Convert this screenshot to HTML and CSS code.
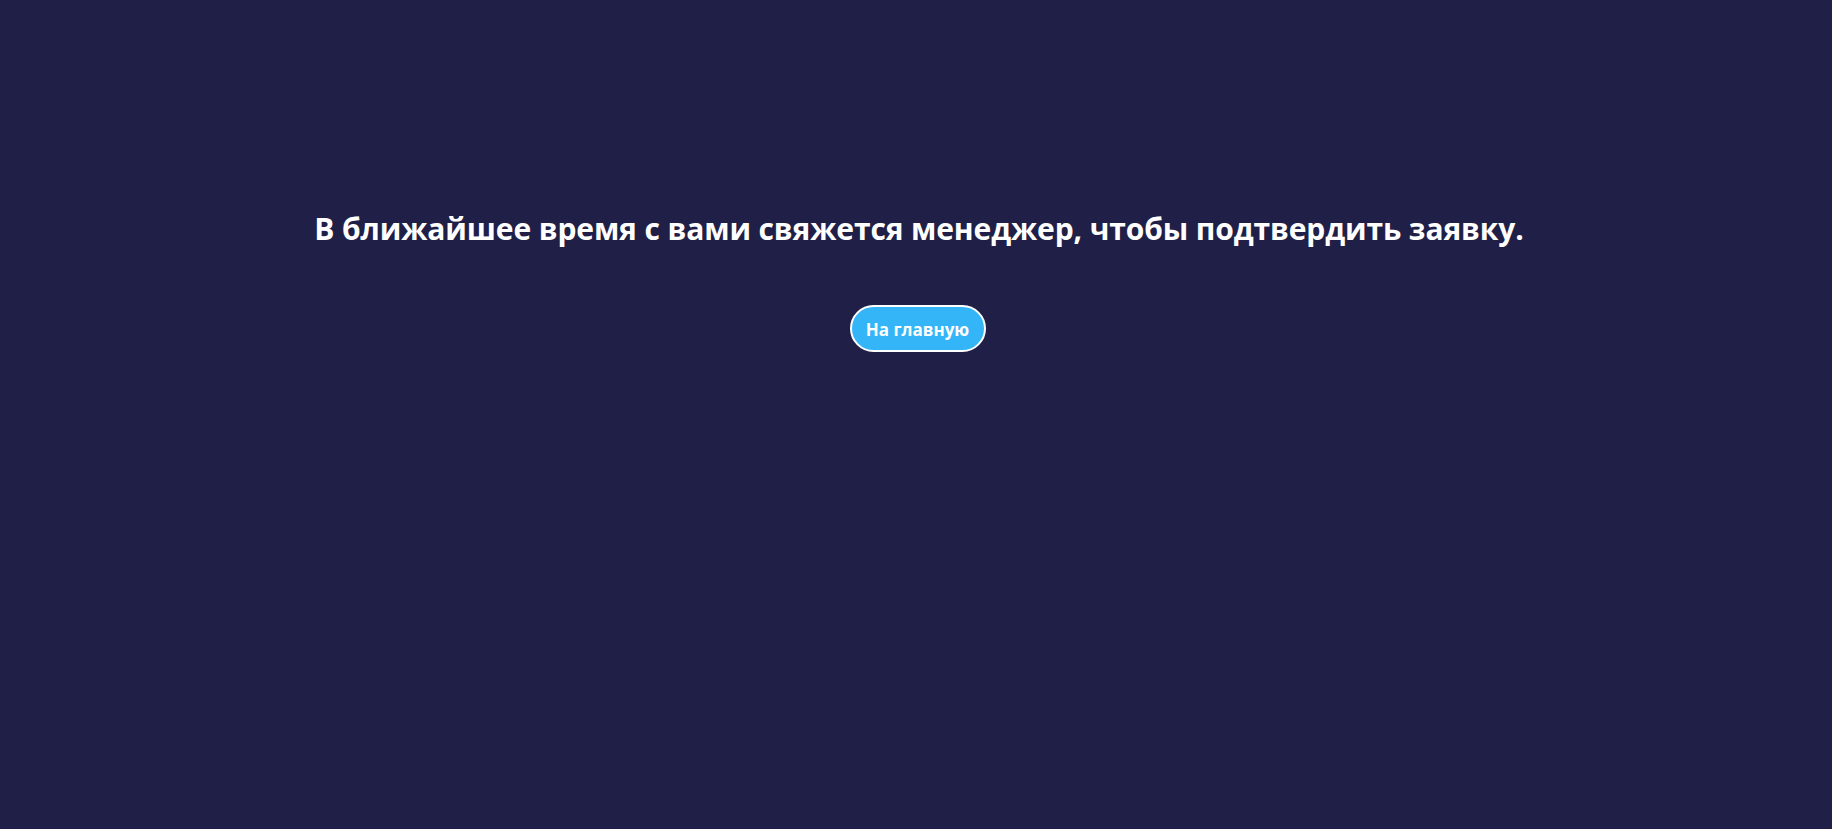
FILE: index.html
```html
<!DOCTYPE html>
<html lang="ru">
<head>
<meta charset="utf-8">
<title>Заявка</title>
<link rel="stylesheet" href="styles.css">
</head>
<body>
<main class="page">
  <h1 class="title">В ближайшее время с вами свяжется менеджер, чтобы подтвердить заявку.</h1>
  <a class="home-btn" href="#">На главную</a>
</main>
</body>
</html>
```
FILE: styles.css
```css
html, body {
  margin: 0;
  padding: 0;
  height: 100%;
}
body {
  background: #201f47;
  font-family: "Open Sans", "Noto Sans", "Liberation Sans", sans-serif;
  color: #ffffff;
}
.page {
  display: flex;
  flex-direction: column;
  align-items: center;
  padding-top: 209px;
  padding-left: 6px;
}
.title {
  margin: 0;
  font-size: 30px;
  line-height: 40px;
  font-weight: 700;
  letter-spacing: -0.12px;
  text-align: center;
}
.home-btn {
  margin-top: 56px;
  margin-right: 3px;
  display: flex;
  align-items: center;
  justify-content: center;
  box-sizing: border-box;
  width: 136px;
  height: 47px;
  padding-top: 2px;
  border: 2px solid #ffffff;
  border-radius: 24px;
  background: #33b5f7;
  color: #ffffff;
  font-size: 17px;
  font-weight: 700;
  text-decoration: none;
}
```
